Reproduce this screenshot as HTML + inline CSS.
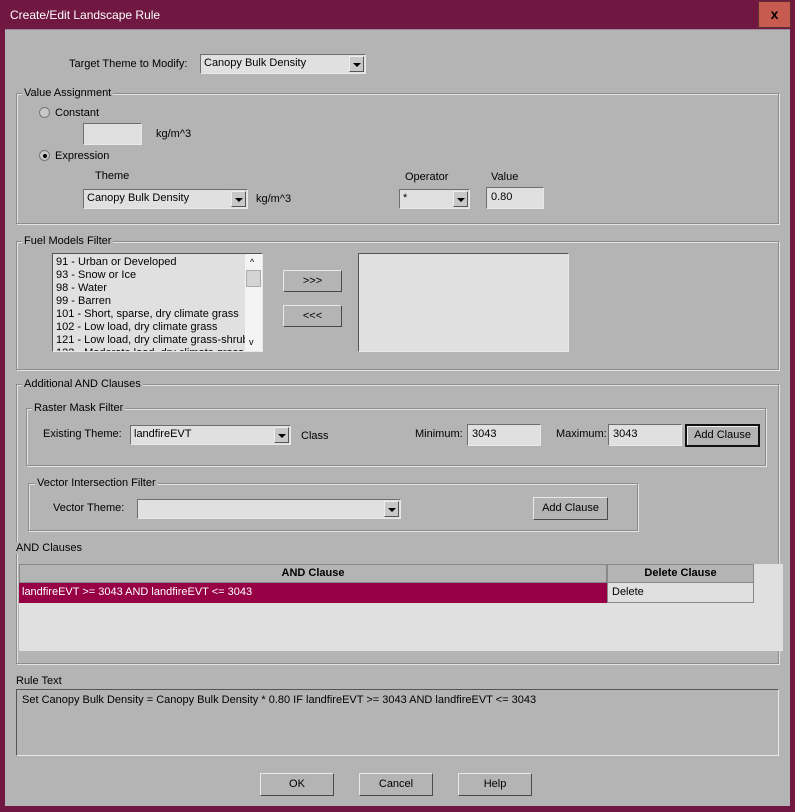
<!DOCTYPE html>
<html><head><meta charset="utf-8"><style>
*{box-sizing:border-box}
body{margin:0;width:795px;height:812px;background:#701842;font-family:"Liberation Sans",Tahoma,sans-serif;font-size:11px;color:#000;position:relative;overflow:hidden}
.a{position:absolute;white-space:nowrap}
#c{position:absolute;left:5px;top:29px;width:785px;height:777px;background:#b4b4b4;border-top:1px solid #9a8aa0}
.g{position:absolute;border:1px solid #8c8c8c;box-shadow:1px 1px 0 #e4e4e4,inset 1px 1px 0 #e4e4e4}
.gl{position:absolute;background:#b4b4b4;padding:0 2px;line-height:12px;white-space:nowrap}
.tb{position:absolute;background:#e0e0e0;border:1px solid;border-color:#6e6e6e #e8e8e8 #e8e8e8 #6e6e6e;padding:2px 4px;line-height:14px}
.cb{position:absolute;background:#e0e0e0;border:1px solid;border-color:#6e6e6e #e8e8e8 #e8e8e8 #6e6e6e;padding:0 3px;line-height:17px}
.cb .ar{position:absolute;right:1px;top:1px;bottom:1px;width:15px;background:#c8c8c8;border:1px solid;border-color:#eee #555 #555 #eee}
.cb .ar:after{content:"";position:absolute;left:3px;top:6px;border:4px solid transparent;border-top:4px solid #000;border-bottom:0}
.bt{position:absolute;background:#b4b4b4;border:1px solid;border-color:#e8e8e8 #4a4a4a #4a4a4a #e8e8e8;text-align:center;font-size:11px}
.rd{position:absolute;width:11px;height:11px;border-radius:50%;background:#c8c8c8;border:1px solid #777}
</style></head><body>
<div class="a" style="left:10px;top:8px;color:#fff;font-size:12px">Create/Edit Landscape Rule</div>
<div class="a" style="left:758px;top:1px;width:33px;height:27px;background:#c75b4f;border:1px solid #5a3030;text-align:center;line-height:25px;font-weight:bold;font-size:14px">x</div>
<div id="c"></div>

<div class="a" style="left:69px;top:58px">Target Theme to Modify:</div>
<div class="cb" style="left:200px;top:54px;width:166px;height:20px">Canopy Bulk Density<div class="ar"></div></div>

<div class="g" style="left:16px;top:93px;width:763px;height:131px"></div>
<div class="gl" style="left:22px;top:87px">Value Assignment</div>
<div class="rd" style="left:39px;top:107px"></div>
<div class="a" style="left:55px;top:107px">Constant</div>
<div class="tb" style="left:83px;top:123px;width:59px;height:22px"></div>
<div class="a" style="left:156px;top:128px">kg/m^3</div>
<div class="rd" style="left:39px;top:150px"></div><div class="a" style="left:43px;top:154px;width:4px;height:4px;background:#000;border-radius:50%"></div>
<div class="a" style="left:55px;top:150px">Expression</div>
<div class="a" style="left:95px;top:170px">Theme</div>
<div class="cb" style="left:83px;top:189px;width:165px;height:20px">Canopy Bulk Density<div class="ar"></div></div>
<div class="a" style="left:256px;top:193px">kg/m^3</div>
<div class="a" style="left:405px;top:171px">Operator</div>
<div class="cb" style="left:399px;top:189px;width:71px;height:20px">*<div class="ar"></div></div>
<div class="a" style="left:491px;top:171px">Value</div>
<div class="tb" style="left:486px;top:187px;width:58px;height:22px">0.80</div>

<div class="g" style="left:16px;top:241px;width:763px;height:129px"></div>
<div class="gl" style="left:22px;top:235px">Fuel Models Filter</div>
<div class="a" style="left:52px;top:253px;width:211px;height:99px;background:#e0e0e0;border:1px solid;border-color:#555 #e8e8e8 #e8e8e8 #555;overflow:hidden;line-height:13px;padding:2px 0 0 3px">91 - Urban or Developed<br>93 - Snow or Ice<br>98 - Water<br>99 - Barren<br>101 - Short, sparse, dry climate grass<br>102 - Low load, dry climate grass<br>121 - Low load, dry climate grass-shrub<br>122 - Moderate load, dry climate grass
<div class="a" style="right:0;top:0;width:17px;height:97px;background:#f4f4f4"><div class="a" style="left:1px;top:16px;width:15px;height:17px;background:#d4d4d4;border:1px solid #aaa"></div><div class="a" style="left:5px;top:2px;font-size:9px">^</div><div class="a" style="left:4px;top:82px;font-size:9px">v</div></div></div>
<div class="bt" style="left:283px;top:270px;width:59px;height:22px;line-height:20px">&gt;&gt;&gt;</div>
<div class="bt" style="left:283px;top:305px;width:59px;height:22px;line-height:20px">&lt;&lt;&lt;</div>
<div class="a" style="left:358px;top:253px;width:211px;height:99px;background:#e0e0e0;border:1px solid;border-color:#555 #e8e8e8 #e8e8e8 #555"></div>

<div class="g" style="left:16px;top:384px;width:763px;height:280px"></div>
<div class="gl" style="left:22px;top:378px">Additional AND Clauses</div>
<div class="g" style="left:26px;top:408px;width:740px;height:58px"></div>
<div class="gl" style="left:32px;top:402px">Raster Mask Filter</div>
<div class="a" style="left:43px;top:428px">Existing Theme:</div>
<div class="cb" style="left:130px;top:425px;width:161px;height:20px">landfireEVT<div class="ar"></div></div>
<div class="a" style="left:301px;top:430px">Class</div>
<div class="a" style="left:415px;top:428px">Minimum:</div>
<div class="tb" style="left:467px;top:424px;width:74px;height:22px">3043</div>
<div class="a" style="left:556px;top:428px">Maximum:</div>
<div class="tb" style="left:608px;top:424px;width:74px;height:22px">3043</div>
<div class="bt" style="left:685px;top:424px;width:75px;height:23px;line-height:19px;border:2px solid #111;box-shadow:inset 1px 1px #eee">Add Clause</div>

<div class="g" style="left:28px;top:483px;width:610px;height:48px"></div>
<div class="gl" style="left:35px;top:477px">Vector Intersection Filter</div>
<div class="a" style="left:53px;top:502px">Vector Theme:</div>
<div class="cb" style="left:137px;top:499px;width:264px;height:20px"><div class="ar"></div></div>
<div class="bt" style="left:533px;top:497px;width:75px;height:23px;line-height:21px">Add Clause</div>

<div class="gl" style="left:14px;top:542px">AND Clauses</div>
<div class="a" style="left:19px;top:564px;width:764px;height:87px;background:#e0e0e0"></div>
<div class="a" style="left:19px;top:564px;width:588px;height:19px;background:#b4b4b4;border:1px solid #888;text-align:center;font-weight:bold;line-height:17px">AND Clause</div>
<div class="a" style="left:607px;top:564px;width:147px;height:19px;background:#b4b4b4;border:1px solid #888;text-align:center;font-weight:bold;line-height:17px">Delete Clause</div>
<div class="a" style="left:19px;top:583px;width:588px;height:20px;background:#970045;color:#fff;line-height:18px;padding-left:3px">landfireEVT &gt;= 3043 AND landfireEVT &lt;= 3043</div>
<div class="a" style="left:607px;top:583px;width:147px;height:20px;border:1px solid #888;border-top:0;line-height:18px;padding-left:4px">Delete</div>

<div class="a" style="left:16px;top:675px">Rule Text</div>
<div class="a" style="left:16px;top:689px;width:763px;height:67px;border:1px solid;border-color:#555 #e8e8e8 #e8e8e8 #555;padding:4px 5px">Set Canopy Bulk Density = Canopy Bulk Density * 0.80 IF landfireEVT &gt;= 3043 AND landfireEVT &lt;= 3043</div>

<div class="bt" style="left:260px;top:773px;width:74px;height:23px;line-height:21px">OK</div>
<div class="bt" style="left:359px;top:773px;width:74px;height:23px;line-height:21px">Cancel</div>
<div class="bt" style="left:458px;top:773px;width:74px;height:23px;line-height:21px">Help</div>
</body></html>
